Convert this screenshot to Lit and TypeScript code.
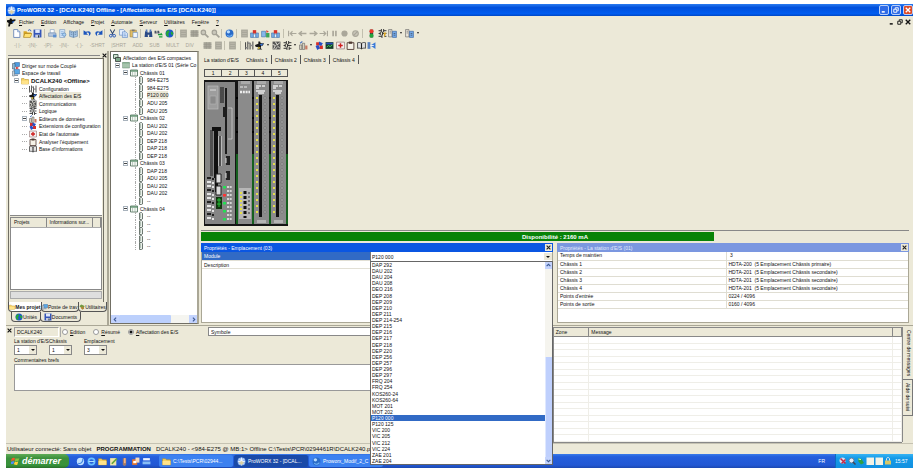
import { LitElement, html, css, svg, nothing } from "lit";
import { customElement, property } from "lit/decorators.js";

const art: Record<string, unknown> = {
  app: svg`<circle cx="8" cy="8" r="7" fill="#8fb7f5"/><path d="M2 8h12M8 1v14M4 3c4 4 4 6 0 10M12 3c-4 4-4 6 0 10" stroke="#fff" stroke-width="1.4" fill="none"/><path d="M3 10l5 4 5-4-5-3z" fill="#d8d0a8"/>`,
  hand: svg`<path d="M0 4l5-1V1h3l1 2 6-1v3l-4 2-1 3-4 1-1 4H2l1-6-3-2z" fill="#111"/><path d="M8 7l5-2-2 4z" fill="#2563d8"/>`,
  page: svg`<path d="M3 1h7l4 4v10H3z" fill="#fff" stroke="#5878b0" stroke-width="1.4"/><path d="M10 1v4h4" fill="#c8dcf8" stroke="#5878b0"/>`,
  open: svg`<path d="M1 4h5l2 2h6v8H1z" fill="#d9a520"/><path d="M3 8h13l-3 7H1z" fill="#ffe070" stroke="#9c7410"/><path d="M9 3c2-3 5-2 5 1" stroke="#2050b0" fill="none" stroke-width="1.5"/>`,
  save: svg`<path d="M1 1h14v14H1z" fill="#3455b8"/><path d="M4 1h8v6H4z" fill="#dfe8fa"/><path d="M4 10h8v5H4z" fill="#c5cbe0"/><path d="M9 11h2v4H9z" fill="#233"/>`,
  print: svg`<path d="M4 1h7v6H4z" fill="#fff" stroke="#7895bd"/><path d="M1 7h13v6H1z" fill="#b7c8de" stroke="#6684ab"/><path d="M9 10h6v5H9z" fill="#5b8fd0"/>`,
  preview: svg`<path d="M3 1h9v14H3z" fill="#d7e8fa" stroke="#6b8db6"/><path d="M5 5h5M5 8h5M5 11h3" stroke="#568cc8"/><circle cx="11" cy="10" r="3" fill="#a8d0f5" stroke="#4c79ad"/>`,
  book: svg`<path d="M1 3l7 2 7-2v10l-7 2-7-2z" fill="#a4c4e4" stroke="#5b7fa8"/><path d="M8 5v10M3 6l3 1M3 9l3 1M10 7l3-1M10 10l3-1" stroke="#47698e"/>`,
  undo: svg`<path d="M1 2v8h8L6 7c3-2 6 0 4 6 7-5 3-12-5-8z" fill="#1c55bd"/>`,
  redo: svg`<path d="M15 2v8H7l3-3c-3-2-6 0-4 6-7-5-3-12 5-8z" fill="#1c55bd"/>`,
  cut: svg`<path d="M4 1l5 9M12 1L7 10" stroke="#28406c" stroke-width="1.8"/><circle cx="5" cy="12" r="2.4" fill="none" stroke="#1c4fb5" stroke-width="1.6"/><circle cx="11" cy="12" r="2.4" fill="none" stroke="#1c4fb5" stroke-width="1.6"/>`,
  copy: svg`<path d="M1 1h7l2 2v8H1z" fill="#eaf3ff" stroke="#4a78bd"/><path d="M6 5h6l3 3v7H6z" fill="#d5e6fc" stroke="#4a78bd"/><path d="M8 9h4M8 12h5" stroke="#4a78bd"/>`,
  paste: svg`<path d="M2 2h11v12H2z" fill="#e2bd62" stroke="#96793a"/><path d="M5 1h5v3H5z" fill="#777"/><path d="M7 6h8v9H7z" fill="#f0f6ff" stroke="#5981b7"/>`,
  find: svg`<path d="M2 4h4l1 10H1zM10 4h4l1 10H9zM6 6h4v4H6z" fill="#2b4a86"/><path d="M3 1h3v4H3zM10 1h3v4h-3z" fill="#4f77be"/>`,
  replace: svg`<path d="M1 3h3l1 5H1zM6 3h3l1 5H6z" fill="#4a5262"/><path d="M7 10h7l-2-3M15 14H9" stroke="#18a038" fill="none" stroke-width="2"/>`,
  globe: svg`<circle cx="8" cy="8" r="7" fill="#1d55d0"/><path d="M3 4c4-4 7 0 4 3s2 4-1 7C2 13 0 8 3 4zM11 4l4 3-2 5-3-4z" fill="#25a53b"/>`,
  grayBox: svg`<path d="M2 1h12v14H2z" fill="#a9a79b"/><path d="M4 4h8M4 8h8M4 12h8" stroke="#c9c6b8"/>`,
  grayGrid: svg`<path d="M1 2h14v12H1z" fill="#a9a79b"/><path d="M1 6h14M1 10h14M6 2v12M11 2v12" stroke="#96948a"/>`,
  zoom: svg`<circle cx="6" cy="6" r="4" fill="#c9c7ba" stroke="#a3a196" stroke-width="2"/><path d="M9 9l6 6" stroke="#a3a196" stroke-width="3"/>`,
  help: svg`<circle cx="8" cy="8" r="7" fill="#2a6bc8"/><circle cx="6" cy="5" r="3" fill="#b8dcff"/><path d="M4 11c3 3 7 2 9-1" stroke="#6fb1f2" stroke-width="2" fill="none"/>`,
  rackRed: svg`<path d="M1 7h5v8H1zM10 7h5v8h-5z" fill="#77aee8" stroke="#3d6da6"/><path d="M5 2h6v6H5z" fill="#d8322a"/><path d="M6 9h4v6H6z" fill="#e8f0fa" stroke="#3d6da6"/>`,
  rackGreen: svg`<path d="M1 4h7v10H1z" fill="#86b6ea" stroke="#3d6da6"/><path d="M9 7h6v8H9z" fill="#3fa45a"/><path d="M9 2l5 2-4 3z" fill="#e04434"/>`,
  arrowL: svg`<path d="M1 3v10M15 8H4M8 4L4 8l4 4" stroke="#aaa79a" stroke-width="2" fill="none"/>`,
  arrowBack: svg`<path d="M15 8H2M7 4L2 8l5 4" stroke="#aaa79a" stroke-width="2.4" fill="none"/>`,
  arrowFwd: svg`<path d="M1 8h13M9 4l5 4-5 4" stroke="#aaa79a" stroke-width="2.4" fill="none"/>`,
  arrowR: svg`<path d="M15 3v10M1 8h11M8 4l4 4-4 4" stroke="#aaa79a" stroke-width="2" fill="none"/>`,
  pause: svg`<path d="M4 3h3v10H4zM9 3h3v10H9z" fill="#aaa79a"/>`,
  dot: svg`<circle cx="8" cy="8" r="5.5" fill="#aaa79a"/>`,
  ring: svg`<circle cx="8" cy="8" r="5" fill="#c9c6b9" stroke="#aaa79a" stroke-width="2"/><path d="M4 12l8-8" stroke="#aaa79a" stroke-width="2"/>`,
  traffic: svg`<path d="M5 1h6v14H5z" fill="#3b4a3c"/><circle cx="8" cy="4" r="3.6" fill="#f0352c"/><circle cx="8" cy="12" r="3.6" fill="#22a53a"/>`,
  ladder: svg`<path d="M1 3h5M10 3h5M1 8h3M8 8h7M1 13h6M11 13h4M6 0v6M10 0v6M4 5v6M8 5v6M7 10v6M11 10v6" stroke="#333" stroke-width="1.7"/>`,
  ladderY: svg`<path d="M1 3h5M10 3h5M1 8h3M8 8h7M1 13h6M11 13h4M6 0v6M10 0v6M4 5v6M8 5v6M7 10v6" stroke="#333" stroke-width="1.7"/><path d="M10 6h5l-4 9z" fill="#d8a426"/>`,
  docBlue: svg`<path d="M1 1h6v13H1z" fill="#e8e4da" stroke="#555"/><path d="M8 4h7v11H8z" fill="#73a8e8" stroke="#2b5799"/><path d="M3 4h2M3 7h2M10 8h3M10 11h3" stroke="#333"/>`,
  config: svg`<path d="M1 2v13M5 1v14M9 3v12M14 1v14" stroke="#444" stroke-width="1.8"/><path d="M5 4h4M9 8h5M1 12h4" stroke="#888" stroke-width="2.5"/>`,
  io: svg`<path d="M0 7l6-2V1h3l1 3 6 0-2 4-3 1-1 4 3 2H4l2-4-5-1z" fill="#161616"/><path d="M8 6l7-2-3 5z" fill="#3c77d8"/><path d="M6 10l3 1-1 3-3 0z" fill="#c9b43c"/>`,
  comm: svg`<path d="M1 1h14v14H1z" fill="#555"/><path d="M1 6l5 2-3 6M6 1l3 6 5-4M9 8l5 5M6 15l3-4" stroke="#e8e6dc" stroke-width="1.7" fill="none"/>`,
  data: svg`<path d="M1 7h4v8H1zM6 4h4v11H6z" fill="#d9d2c0" stroke="#555"/><path d="M11 8h4v7h-4z" fill="#c87a63"/><path d="M2 4l4-3" stroke="#4a72bb" stroke-width="2"/>`,
  ext: svg`<path d="M2 2h6v6H2zM8 8h6v6H8z" fill="#d92f28"/><path d="M7 1l7 3-3 5-4-2zM1 9l5-2 3 6-5 3z" fill="#264fc6"/>`,
  screen: svg`<path d="M1 2h14v12H1z" fill="#153c2a"/><path d="M2 3h12v3H2z" fill="#264dba"/><path d="M3 11l3-3 3 2 4-3" stroke="#48dc62" fill="none" stroke-width="1.6"/>`,
  status: svg`<path d="M1 2h14v12H1z" fill="#f6efef" stroke="#7a5a58"/><path d="M8 4v8M4 8h8" stroke="#cf1f1f" stroke-width="2.6"/>`,
  clip: svg`<path d="M2 3h12v12H2z" fill="#f5f2e8" stroke="#503a32" stroke-width="1.6"/><path d="M5 1h6v4H5z" fill="#503a32"/>`,
  base: svg`<path d="M1 3c3-1 5 0 7 1 2-1 4-2 7-1v10c-3-1-5 0-7 1-2-1-4-2-7-1z" fill="#e3e3e3" stroke="#444" stroke-width="1.6"/><path d="M8 4v10" stroke="#222" stroke-width="2"/>`,
  link: svg`<path d="M1 2h5v12H1z" fill="#5a82c0"/><path d="M15 2v12L6 8z" fill="#3b7ad8"/><path d="M6 8h6" stroke="#fff" stroke-width="1.6"/>`,
  pc: svg`<path d="M4 1h11v9H4z" fill="#58a8e8" stroke="#2c5e94"/><path d="M6 11h6v3H6z" fill="#8b9bae"/><path d="M1 4h4v10H1z" fill="#c8d4e0" stroke="#567"/>`,
  pcRed: svg`<path d="M5 1h10v8H5z" fill="#4d9be0" stroke="#2c5e94"/><path d="M1 3h5v11H1z" fill="#8ab8d8" stroke="#345"/><path d="M8 10l5 4M13 10l-5 4" stroke="#d33" stroke-width="2"/>`,
  folder: svg`<path d="M1 3h5l2 2h7v9H1z" fill="#f5cf5c" stroke="#b58a1c"/><path d="M1 7h14v7H1z" fill="#ffe38a"/>`,
  chassis: svg`<path d="M1 2h14v12H1z" fill="#f3f7f3" stroke="#4a6a54" stroke-width="1.6"/><path d="M1 4h14" stroke="#4f8a62" stroke-width="2.5"/><path d="M5 5v9M10 5v9" stroke="#86a08e"/>`,
  station: svg`<path d="M1 3h14v11H1z" fill="#dce9dd" stroke="#61806a"/><path d="M1 4h14M4 5v9M8 5v9M12 5v9" stroke="#4c8a5c" stroke-width="1.5"/>`,
  rootIcon: svg`<path d="M1 1h9v8H1z" fill="#cde0d0" stroke="#2c4a36" stroke-width="1.6"/><path d="M5 7h10v8H5z" fill="#7ea98a" stroke="#222" stroke-width="1.4"/>`,
  module: svg`<path d="M5 2l4-1 2 2v11l-2 1H5z" fill="#e9efea" stroke="#55625a" stroke-width="1.7"/><path d="M7 4v8" stroke="#7a927f"/>`,
  utils: svg`<path d="M1 6l5-5 9 4-4 8z" fill="#6f9a3e"/><path d="M4 10l6-4 4 6-5 3z" fill="#b08436"/>`,
  ie: svg`<circle cx="8" cy="8" r="5.5" fill="none" stroke="#6ac0ff" stroke-width="3"/><path d="M3 8h10" stroke="#b0e0ff" stroke-width="2"/>`,
  mail: svg`<circle cx="8" cy="8" r="6.5" fill="#bfe0ff"/><path d="M4 11c5 2 9-3 8-8" stroke="#3f86e0" fill="none" stroke-width="2"/>`,
  paint: svg`<path d="M2 2h11v13H2z" fill="#f0e6a8"/><path d="M5 12l9-9" stroke="#64a63c" stroke-width="3"/>`,
  acro: svg`<path d="M5 2h6v12l-3 2-3-2z" fill="#a07a6a"/><path d="M7 2h3v9H7z" fill="#f0b482"/>`,
  office: svg`<path d="M2 4h9v10H2z" fill="#e8762c"/><path d="M8 1h7v9H8z" fill="#f5d9bd"/><path d="M4 7h5v4H4z" fill="#fff"/>`,
  desk: svg`<path d="M2 2h12v4H2z" fill="#f0f5ff"/><path d="M1 8h14v5H1z" fill="#88bdf5"/>`,
  flag: svg`<path d="M1 3c2-2 4-2 6-1L6 7C4 6 2 6 0 8z" fill="#f0582c"/><path d="M8 2c2 1 4 1 7 0l-2 5c-2 1-4 1-6 0z" fill="#86c440"/><path d="M0 9c2-2 4-2 6-1l-2 5c-2-1-3-1-5 1z" fill="#4c8df5"/><path d="M7 8c2 1 4 1 6 0l-2 6c-2 1-4 0-6-1z" fill="#fbd034"/>`,
  trayRed: svg`<circle cx="7" cy="7" r="6" fill="#d5dff0"/><path d="M3 3l10 10M13 5l-8 8" stroke="#c82844" stroke-width="3"/>`,
  traySearch: svg`<circle cx="7" cy="7" r="5" fill="#e8edf5" stroke="#667a9a" stroke-width="2"/><path d="M10 10l5 5" stroke="#445" stroke-width="3"/>`,
  trayGreen: svg`<path d="M2 2l7 2 5 8-6 3-5-6z" fill="#2fa043"/><path d="M3 4l5 1" stroke="#d8ffd8" stroke-width="2"/>`,
  blank: svg`<path d="M1 1h15v15H1z" fill="#f4f3e6"/>`,
  lock: svg`<path d="M2 7h12v8H2z" fill="#d8c766"/><path d="M5 7V4c0-4 6-4 6 0v3" stroke="#dfe6f0" stroke-width="2" fill="none"/>`,
};

const icon = (name: string) =>
  html`<svg class="icon" viewBox="0 0 16 16" aria-hidden="true">${art[name]}</svg>`;

const base = css`
  * { box-sizing: border-box; }
  .icon { width: 9px; height: 9px; flex: none; display: block; }
  button, input, select, textarea { font: inherit; color: inherit; margin: 0; padding: 0; border: 0; background: none; border-radius: 0; }
  ul { list-style: none; margin: 0; padding: 0; }
`;

const SEP = "|";
const WIDE = "||";
const fileTools = ["page", "open", "save", SEP, "print", "preview", "book", SEP, "undo", "redo", SEP, "cut", "copy", "paste", SEP,
  "find", "replace", "globe", SEP, "grayBox", "grayGrid", "zoom", "zoom", SEP, "help", SEP, "grayBox", "rackRed", "rackGreen", "rackRed", WIDE,
  "arrowL", "arrowBack", "arrowFwd", "arrowR", "pause", "dot", "ring", WIDE, "traffic", "ladderY", "docBlue", "v", "docBlue", "v"];
const viewTools = ["grayGrid", "grayBox", SEP, "grayBox", WIDE, "config", "io", "v", "comm", "ladder", "v", "data", "v", "ext", "screen", "status", "clip", "base", "link"];
const logicTools = ["-| |-", "-|N|-", "-|P|-", "-|N|-", "-( )-", "-SHRT", "|SHRT", "ADD", "SUB", "MULT", "DIV"];

@customElement("tool-strip")
class ToolStrip extends LitElement {
  @property({ attribute: false }) items: string[] = [];
  static styles = [base, css`
    :host { display: flex; align-items: center; }
    .tool { width: 10px; height: 10px; display: grid; place-items: center; margin-right: 1px; flex: none; }
    .tool:nth-of-type(2n) { margin-right: 0; }
    .sep { width: 1px; height: 9px; background: #c2bfae; margin: 0 2px 0 1px; flex: none; }
    .wide { margin: 0 3px 0 2px; }
    .more { width: 5px; margin-right: 1px; display: grid; place-items: center; }
    .more::after { content: ""; border: 1px solid transparent; border-top: 2px solid #222; }
  `];
  render() {
    return this.items.map((n) => n === SEP || n === WIDE ? html`<span class="sep ${n === WIDE ? "wide" : ""}"></span>`
      : n === "v" ? html`<button class="more" aria-label="Options"></button>`
      : html`<button class="tool" aria-label=${n}>${icon(n)}</button>`);
  }
}

interface Node { t: string; i: string; l: number; open?: string; bold?: boolean; sel?: boolean }

@customElement("tree-list")
class TreeList extends LitElement {
  @property({ attribute: false }) nodes: Node[] = [];
  static styles = [base, css`
    :host { display: block; }
    ul { height: 100%; display: grid; grid-auto-rows: 1fr; }
    li { display: flex; align-items: center; min-height: 0; white-space: nowrap; gap: 2px; }
    .l0 { padding-left: 2px; }
    .l1 { padding-left: 4px; }
    .l2 { padding-left: 12px; }
    .l3 { padding-left: 28px; }
    .icon { width: 8px; height: 8px; }
    .box { width: 5px; height: 5px; border: 1px solid #a9b3bd; display: grid; place-items: center; flex: none; }
    .box::after { content: ""; width: 3px; height: 1px; background: #444; }
    .stub { width: 5px; border-top: 1px dotted #aaa; flex: none; }
    .l3 .stub { border-left: 1px dotted #aaa; align-self: stretch; border-top: 0; margin-right: -4px; margin-left: -4px; width: 4px; }
    .bold { font-weight: bold; font-size: 6px; }
    .sel { background: #ece9d8; }
  `];
  render() {
    return html`<ul>${this.nodes.map((n) => html`<li class="l${n.l}">
      ${n.open ? html`<span class="box"></span>` : n.l > 1 ? html`<span class="stub"></span>` : nothing}
      ${icon(n.i)}<span class="${n.bold ? "bold" : ""} ${n.sel ? "sel" : ""}">${n.t}</span></li>`)}</ul>`;
  }
}

const projectNodes: Node[] = [
  { t: "Diriger sur mode Couplé", i: "pcRed", l: 0 },
  { t: "Espace de travail", i: "pc", l: 0 },
  { t: "DCALK240 <Offline>", i: "folder", l: 1, open: "-", bold: true },
  { t: "Configuration", i: "config", l: 2 },
  { t: "Affectation des E/S", i: "io", l: 2, sel: true },
  { t: "Communications", i: "comm", l: 2 },
  { t: "Logique", i: "ladder", l: 2 },
  { t: "Editeurs de données", i: "data", l: 2, open: "+" },
  { t: "Extensions de configuration", i: "ext", l: 2 },
  { t: "Etat de l'automate", i: "status", l: 2 },
  { t: "Analyser l'équipement", i: "clip", l: 2 },
  { t: "Base d'informations", i: "base", l: 2 },
];

const chassis: [string, string[]][] = [
  ["Châssis 01", ["984-E275", "984-E275", "P120 000", "ADU 205", "ADU 205"]],
  ["Châssis 02", ["DAU 202", "DAU 202", "DEP 218", "DAP 218", "DEP 218"]],
  ["Châssis 03", ["DAP 218", "ADU 205", "DAU 202", "DAU 202", "--"]],
  ["Châssis 04", ["--", "--", "--", "--", "--"]],
];
const ioNodes: Node[] = [
  { t: "Affectation des E/S compactes", i: "rootIcon", l: 0 },
  { t: "La station d'E/S 01 (Série Co", i: "station", l: 1, open: "-" },
  ...chassis.flatMap(([t, mods]): Node[] => [
    { t, i: "chassis", l: 2, open: "-" },
    ...mods.map((m): Node => ({ t: m, i: "module", l: 3, sel: m === "P120 000" })),
  ]),
];

const modules = ["DAP 292", "DAU 202", "DAU 204", "DAU 208", "DEO 216", "DEP 208", "DEP 209", "DEP 210", "DEP 211", "DEP 214-254",
  "DEP 215", "DEP 216", "DEP 217", "DEP 218", "DEP 220", "DEP 256", "DEP 257", "DEP 296", "DEP 297", "FRQ 204", "FRQ 254",
  "KOS260-24", "KOS260-64", "MOT 201", "MOT 202", "P120 000", "P120 125", "VIC 200", "VIC 205", "VIC 212", "VIC 224", "ZAE 201", "ZAE 204"];

const stationRows = [
  ["Temps de maintien", " 3"],
  ["Châssis 1", "HDTA-200  (5 Emplacement Châssis primaire)"],
  ["Châssis 2", "HDTA-201  (5 Emplacement Châssis secondaire)"],
  ["Châssis 3", "HDTA-201  (5 Emplacement Châssis secondaire)"],
  ["Châssis 4", "HDTA-201  (5 Emplacement Châssis secondaire)"],
  ["Points d'entrée", "0224 / 4096"],
  ["Points de sortie", "0160 / 4096"],
];

const range = (n: number) => Array.from({ length: n }, (_, i) => i);

const ioModule = (x: number) => svg`
  <rect x=${x} y="1" width="15" height="143" fill="#8b8b8b"/>
  <rect x=${x + 3} y="1" width="9" height="3" fill="#aaa"/>
  <path d="M${x + 2} 6h5M${x + 2} 8h3M${x + 8} 6h3M${x + 2} 11h9M${x + 4} 13h6" stroke="#e8e8e8" stroke-width="1.4"/>
  <rect x=${x + 5} y="15" width="3" height="122" fill="#111"/>
  <rect x=${x + 3} y="140" width="9" height="3" fill="#b5b5b5"/>
  ${range(20).map((i) => svg`<rect x=${x + 2} y=${17 + i * 6} width="2" height="2" fill="#e6e04a"/><circle cx=${x + 11} cy=${18 + i * 6} r="1.3" fill="#aaa" stroke="#666" stroke-width=".5"/>`)}
`;

const rackArt = svg`
  <rect width="84" height="146" fill="#161616"/>
  <rect x="1" y="2" width="30" height="142" fill="#858585"/>
  <rect x="4" y="6" width="10" height="23" fill="#9d9d9d" stroke="#bbb" stroke-width=".7"/>
  <path d="M6 10h6" stroke="#ddd"/><rect x="6" y="16" width="6" height="8" fill="#8a8a8a" stroke="#bbb" stroke-width=".5"/>
  ${range(8).map((i) => svg`<path d="M16 ${8 + i * 2}h4" stroke="#111"/>`)}
  <path d="M22 8v66" stroke="#1c1c1c" stroke-width="2"/><path d="M20 27v10" stroke="#1c1c1c" stroke-width="2"/>
  <path d="M24 28h4v31h-4" stroke="#ccc" fill="none" stroke-width=".8"/>
  <path d="M8 47h9v4H8z" fill="#101010"/>
  <path d="M10 50h4v62h-3V98h-1z" fill="#101010"/>
  ${range(23).map((i) => svg`<path d="M6 ${51 + i * 2}h3" stroke="#1c1c1c"/>`)}
  <path d="M14 56h4v30h-4z" fill="#b9b9b9"/><path d="M16 56v30" stroke="#222" stroke-width="1.4"/>
  <path d="M12 94h5v9h-5zM12 106h5v9h-5z" fill="#ddd" stroke="#222"/>
  <rect x="12" y="117" width="6" height="12" fill="#12360f"/><path d="M13 120h4M13 124h4M15 118v9" stroke="#23c136"/>
  <path d="M22 76h4v9h-4zM22 91h4v9h-4z" fill="#222"/><path d="M22 78v5M22 93v5" stroke="#ddd"/>
  ${range(11).map((i) => svg`<path d="M3 ${98 + i * 4}h4M8 ${99 + i * 4}h2" stroke=${i % 3 ? "#e4e4e4" : "#222"} stroke-width="2"/>`)}
  ${range(9).map((i) => svg`<rect x="19" y=${106 + i * 4} width="3" height="2.5" fill=${i === 2 ? "#f33" : i % 2 ? "#858585" : "#22e052"}/><path d="M23 ${107 + i * 4}h5" stroke="#eee" stroke-width="1.5" stroke-dasharray="2 .7"/>`)}
  <rect x="34" y="1" width="14" height="143" fill="#8b8b8b"/><rect x="37" y="1" width="9" height="3" fill="#aaa"/>
  <path d="M36 7h8" stroke="#bbb" stroke-width="2" stroke-dasharray="3 1"/><path d="M36 12h10" stroke="#eee" stroke-width="2.4" stroke-dasharray="2 .8"/>
  <rect x="35" y="108" width="12" height="31" fill="#b6b6b6"/><path d="M41 111v27" stroke="#111" stroke-width="3" stroke-dasharray="3 2"/>
  ${range(6).map((i) => svg`<rect x="36" y=${112 + i * 4} width="2" height="2" fill="#e6e04a"/><path d="M44 ${113 + i * 4}h2" stroke="#333"/>`)}
  ${ioModule(50)}${ioModule(67)}
  <path d="M33 74v70M49 74v70M66 74v70M83 74v70" stroke="#167a22" stroke-width="1.5"/>
  <path d="M32 18h2M32 38h2M32 52h2M48 18h2M48 38h2M48 52h2M65 18h2M65 38h2M65 52h2" stroke="#000" stroke-width="2"/>
`;

@customElement("app-root")
class AppRoot extends LitElement {
  static styles = [base, css`
    :host { display: flex; flex-direction: column; height: 100vh; min-height: 460px; box-sizing: border-box; padding: 4px 1px 2px 6px; background: #fff; color: #111;
      font: 5px/8px "Liberation Sans", sans-serif; white-space: nowrap; overflow: hidden; }
    .title { flex: none; height: 12px; display: flex; align-items: center; gap: 1px; padding: 0 0 0 1px; color: #fff; font: bold 6px/8px "Liberation Sans", sans-serif; background: linear-gradient(#2a7bf0, #0050dc 30%, #005cf0 80%, #0048c4); }
    .title h1 { font: inherit; margin: 0; flex: 1; }
    .win { width: 10px; height: 10px; border: 1px solid #b9cff8; border-radius: 2px; background: #2f6be6; color: #fff; display: grid; place-items: center; margin-right: 1px; }
    .win.close { background: #dd4a26; margin-right: 0; }
    .win svg, .mini svg { width: 6px; height: 6px; }
    .shell { flex: 1; min-height: 0; display: flex; flex-direction: column; background: #ece9d8; }
    .menu { flex: none; height: 12px; display: flex; align-items: center; gap: 7px; padding: 0 1px 0 1px; }
    .menu .icon { margin-right: -4px; }
    .grow { flex: 1; }
    .mini { width: 8px; display: grid; place-items: center; margin-left: -7px; }
    .bar { flex: none; height: 11px; display: flex; align-items: center; padding-left: 5px; }
    .bar.second { height: 12px; padding-left: 8px; }
    .logic { display: flex; justify-content: space-between; color: #a9a698; width: 180px; flex: none; margin-right: 8px; }
    .main { flex: none; height: 274px; display: grid; grid-template-columns: 103px 89px minmax(0, 1fr); gap: 1px; }
    .dock { display: flex; flex-direction: column; padding: 1px 0 3px 2px; border-right: 2px solid #aaa796; min-width: 0; }
    .dockhead { height: 6px; display: flex; align-items: center; gap: 1px; }
    .dockhead i { flex: 1; border-top: 1px solid #888; }
    .dockhead button, .x { width: 6px; height: 6px; display: grid; place-items: center; }
    .x svg { width: 5px; height: 5px; }
    .frame { flex: 1; min-height: 0; display: flex; flex-direction: column; margin-right: 3px; border: 1px solid #716f64; border-bottom: 0; background: #ece9d8; padding: 0 1px; }
    .projects { height: 157px; flex: none; background: #fff; border-bottom: 1px solid #888; padding-top: 3px; overflow: hidden; }
    .projects tree-list { height: 91px; }
    .list { flex: 1; background: #fff; border: 1px solid #888; margin-top: 1px; }
    .list table { width: 100%; border-collapse: collapse; table-layout: fixed; background: #ece9d8; }
    th { font-weight: normal; text-align: left; padding: 0 3px; border-right: 1px solid #888; }
    .list th { height: 9px; border-bottom: 1px solid #aaa; }
    .p1 { width: 35px; } .p2 { width: 46px; }
    .thumb { height: 8px; background: #dedede; border: 1px solid #aaa; margin: 1px 0 3px; }
    .tabs { height: 10px; display: flex; }
    .tabs button { flex: 1 0 auto; display: flex; align-items: center; justify-content: center; border: 1px solid #555; border-top: 0; border-radius: 0 0 4px 4px; }
    .tabs button + button { margin-left: -1px; }
    .tabs .on { background: #fff; font-weight: bold; }
    .tabs .icon { width: 6px; height: 6px; }
    .tabs.low { margin: 0 26px 0 3px; }
    .tabs.low .icon { width: 8px; height: 8px; }
    .iotree { background: #fff; border: 1px solid #716f64; border-right: 2px solid #aaa796; display: flex; flex-direction: column; overflow: hidden; padding: 2px 0 0; margin-bottom: 1px; }
    .iotree tree-list { height: 196px; }
    .hscroll { margin: auto 0 0; height: 8px; display: flex; background: #f5f5f0; }
    .hscroll button { width: 8px; background: #c3d3fd; display: grid; place-items: center; }
    .hscroll i { width: 52px; background: #bcd0fc; border-radius: 1px; }
    .hscroll svg { width: 5px; height: 5px; }
    .work { min-width: 0; display: flex; flex-direction: column; padding: 0 4px 2px 1px; }
    .pages { height: 16px; display: flex; align-items: center; padding: 3px 0 0 3px; }
    .pages button { padding: 0 3px; height: 9px; border-right: 1px solid #555; margin-bottom: 2px; }
    .pages button:first-child { border: 0; padding: 0 4px 0 0; }
    .canvas { flex: 1; min-height: 0; border-bottom: 1px solid #888; padding: 2px 0 0 3px; }
    .slots { display: grid; grid-template-columns: repeat(5, 1fr); width: 84px; text-align: center; line-height: 6px; border: 1px solid #555; margin-bottom: 3px; }
    .slots span + span { border-left: 1px solid #555; }
    .rack { display: block; width: 84px; height: 146px; }
    .power { height: 9px; margin: 1px 0 2px; position: relative; display: grid; place-items: center; color: #fff; font-weight: bold; font-size: 6px; }
    .fill { position: absolute; inset: 0 auto 0 0; background: #078307; }
    .power b { position: relative; }
    .props { height: 80px; display: grid; grid-template-columns: 1fr 1fr; gap: 4px; }
    .panel { background: #fff; border: 1px solid #aaa796; border-top: 0; display: flex; flex-direction: column; min-width: 0; }
    .panel h2 { margin: 0 -1px; font: inherit; height: 9px; background: #0a56e2; color: #fff; display: flex; align-items: center; justify-content: space-between; padding: 0 1px 0 3px; }
    .panel.off h2 { background: #7b97e0; color: #e6ecfb; }
    .panel h2 button { width: 7px; height: 7px; background: #ece9d8; color: #222; display: grid; place-items: center; }
    .panel h2 svg { width: 5px; height: 5px; }
    .row { display: grid; grid-template-columns: 12fr 13fr; height: 8px; border-bottom: 1px solid #e2e0d6; }
    .row > * { padding-left: 2px; }
    .row.active { background: #316ac5; color: #fff; height: 9px; }
    .row .cell { position: relative; background: #fff; color: #111; padding: 0; border-left: 1px solid #777; }
    .pick { display: block; appearance: none; width: 100%; height: 9px; padding: 0 1px; }
    .arrow { position: absolute; right: 0; top: 1px; width: 8px; height: 7px; background: #ece9d8; display: grid; place-items: center; pointer-events: none; }
    .arrow::after { content: ""; border: 2px solid transparent; border-top-color: #111; margin-top: 2px; }
    .pop { position: absolute; z-index: 5; left: -1px; right: -1px; top: 9px; height: 204px; display: flex; background: #fff; border: 1px solid #666; line-height: 6px; }
    .pop ul { flex: 1; display: grid; grid-auto-rows: 1fr; }
    .pop li { padding-left: 1px; }
    .pop .cur { background: #316ac5; color: #fff; }
    .vscroll { width: 7px; display: flex; flex-direction: column; background: #f5f4ee; }
    .vscroll button { height: 7px; background: #c3d3fd; display: grid; place-items: center; }
    .vscroll svg { width: 5px; height: 5px; }
    .vscroll i { background: #bfd0fd; flex: 1; margin-top: 88px; border-left: 1px solid #dfe8ff; }
    table.sheet { width: 100%; border-collapse: collapse; table-layout: fixed; }
    .sheet td { height: 8px; padding: 0 2px; border-bottom: 1px solid #dfddd2; line-height: 7px; white-space: pre; }
    .sheet td:first-child { width: 48%; }
    .sheet td + td { border-left: 1px solid #dfddd2; }
    .bottom { flex: 1; min-height: 0; display: flex; border-top: 1px solid #aaa796; padding-top: 1px; }
    .grip { width: 7px; display: flex; justify-content: center; flex: none; }
    .editor { flex: 1; min-width: 0; padding: 0 2px 0 1px; }
    .strip { height: 9px; display: grid; grid-template-columns: 45px 147px 1fr; gap: 1px; }
    .sunk { border: 1px solid #aaa796; border-color: #999 #fff #fff #999; padding-left: 2px; line-height: 8px; }
    .radios { display: flex; align-items: center; gap: 8px; padding-left: 1px; border-left: 1px solid #aaa; }
    .radios label { display: flex; align-items: center; gap: 2px; }
    .radios input { appearance: none; width: 6px; height: 6px; border: 1px solid #999; border-radius: 50%; background: #fff; }
    .radios input:checked { background: radial-gradient(#111 0 1px, #fff 2px); }
    .name { background: #fff; border: 1px solid #888; padding: 0 2px; width: 100%; min-width: 0; height: 9px; }
    .fields { display: flex; padding-top: 1px; }
    .fields label { width: 35px; display: block; }
    .fields span { display: block; height: 8px; }
    .fields select { appearance: none; background: #fff; border: 1px solid #888; width: 23px; height: 10px; padding: 0 2px; display: block; }
    .combo { position: relative; width: 23px; }
    .combo .arrow { right: 1px; top: 1px; height: 8px; width: 7px; }
    .note { display: block; margin-top: 1px; }
    .note textarea { display: block; width: 100%; height: 27px; border: 1px solid #999; background: #fff; resize: none; }
    .messages { flex: 0 0 38.5%; background: #fff; border-left: 1px solid #888; border-bottom: 1px solid #888; }
    .messages table { width: 100%; height: 100%; border-collapse: collapse; table-layout: fixed; }
    .messages th { height: 9px; background: #ece9d8; border: 1px solid #888; border-left: 0; padding: 0 2px; line-height: 7px; }
    .messages td { border-bottom: 1px solid #efeee8; border-right: 1px solid #efeee8; padding: 0; }
    .c1 { width: 35px; } .c3 { width: 9px; }
    .side { width: 11px; flex: none; display: flex; flex-direction: column; border-left: 1px solid #888; margin-bottom: 1px; }
    .side button { writing-mode: vertical-rl; padding: 3px 0; width: 10px; line-height: 9px; }
    .side button + button { border: 1px solid #777; border-left: 0; }
    .foot { flex: none; height: 11px; display: flex; align-items: center; gap: 5px; padding-left: 1px; border-top: 1px solid #c5c2b2; font-size: 6px; }
    .task { flex: none; height: 14px; display: flex; align-items: stretch; color: #fff; background: linear-gradient(#3a7bea, #245edc 20%, #2258d4 80%, #1c48b0); }
    .start { width: 63px; display: flex; align-items: center; gap: 2px; padding-left: 5px; font: italic bold 9px/10px "Liberation Sans", sans-serif; background: linear-gradient(#5eac56, #3c8f3c 30%, #37933a 80%, #2a6f2b); border-radius: 0 5px 5px 0; color: #fff; }
    .quick { width: 90px; display: flex; align-items: center; gap: 2px; padding-left: 7px; }
    .app { width: 74px; margin: 1px 1px 1px 0; background: #3c81f0; border-radius: 2px; display: flex; align-items: center; gap: 2px; padding-left: 3px; }
    .app.on { background: #1a4aa8; }
    .lang { margin-right: 10px; align-self: center; }
    .tray { width: 78px; background: linear-gradient(#38b4f4, #149ae8 30%, #1290e0); display: flex; align-items: center; padding-left: 3px; border-left: 1px solid #0d6bbf; }
    .tray .icon { width: 8px; height: 8px; margin-right: 1px; }
    .tray time { margin-left: 2px; }
  `];

  private cross() {
    return html`<svg viewBox="0 0 8 8" aria-hidden="true"><path d="M1 1l6 6M7 1L1 7" stroke="currentColor" stroke-width="1.8"/></svg>`;
  }
  private chevron(d: string) {
    return html`<svg viewBox="0 0 8 8" aria-hidden="true"><path d=${d} stroke="#3d5a94" stroke-width="1.8" fill="none"/></svg>`;
  }
  private winIcons() {
    return [
      html`<svg viewBox="0 0 8 8"><path d="M1 6.5h4" stroke="currentColor" stroke-width="2"/></svg>`,
      html`<svg viewBox="0 0 8 8"><path d="M3 2.5V1h4v4H5.5M1 3h4v4H1z" stroke="currentColor" fill="none" stroke-width="1.2"/></svg>`,
      this.cross(),
    ];
  }
  private combo(label: string, value: string) {
    return html`<label><span>${label}</span><div class="combo"><select><option>${value}</option></select><i class="arrow"></i></div></label>`;
  }

  render() {
    const names = ["Réduire", "Restaurer", "Fermer"];
    return html`
      <header class="title">${icon("app")}<h1>ProWORX 32 - [DCALK240] Offline - [Affectation des E/S [DCALK240]]</h1>
        ${this.winIcons().map((g, i) => html`<button class="win ${i === 2 ? "close" : ""}" aria-label=${names[i]}>${g}</button>`)}
      </header>
      <div class="shell">
        <nav class="menu">${icon("hand")}
          <button><u>F</u>ichier</button><button><u>E</u>dition</button><button>Affichage</button><button><u>P</u>rojet</button><button><u>A</u>utomate</button><button><u>S</u>erveur</button><button><u>U</u>tilitaires</button><button>Fe<u>n</u>être</button><button><u>?</u></button>
          <span class="grow"></span>
          ${this.winIcons().map((g, i) => html`<button class="mini" aria-label=${names[i]}>${g}</button>`)}
        </nav>
        <div class="bar"><tool-strip .items=${fileTools}></tool-strip></div>
        <div class="bar second"><div class="logic">${logicTools.map((t) => html`<button disabled>${t}</button>`)}</div><tool-strip .items=${viewTools}></tool-strip></div>

        <main class="main">
          <aside class="dock">
            <div class="dockhead"><i></i><button aria-label="Fermer" class="x">${this.cross()}</button></div>
            <div class="frame">
              <div class="projects"><tree-list .nodes=${projectNodes}></tree-list></div>
              <div class="list"><table><tr><th class="p1">Projets</th><th class="p2">Informations sur...</th><th></th></tr></table></div>
              <div class="thumb"></div>
            </div>
            <div class="tabs"><button class="on">${icon("folder")}Mes projet</button><button>${icon("pc")}Poste de trav</button><button>${icon("utils")}Utilitaires</button></div>
            <div class="tabs low"><button>${icon("globe")}Unités</button><button>${icon("save")}Documents</button></div>
          </aside>

          <section class="iotree">
            <tree-list .nodes=${ioNodes}></tree-list>
            <div class="hscroll"><button aria-label="Gauche">${this.chevron("M5 1L2 4l3 3")}</button><i></i><span class="grow"></span><button aria-label="Droite">${this.chevron("M3 1l3 3-3 3")}</button></div>
          </section>

          <section class="work">
            <div class="pages"><button>La station d'E/S</button>${[1, 2, 3, 4].map((n) => html`<button>Châssis ${n}</button>`)}</div>
            <div class="canvas">
              <div class="slots">${[1, 2, 3, 4, 5].map((n) => html`<span>${n}</span>`)}</div>
              <svg class="rack" viewBox="0 0 84 146" role="img" aria-label="Châssis 1">${rackArt}</svg>
            </div>
            <div class="power"><div class="fill" style="width:72.4%"></div><b>Disponibilité : 2160 mA</b></div>
            <div class="props">
              <section class="panel">
                <h2>Propriétés - Emplacement (03)<button aria-label="Fermer">${this.cross()}</button></h2>
                <div class="row active"><label for="module">Module</label>
                  <div class="cell"><select id="module" class="pick"><option>P120 000</option></select><i class="arrow"></i>
                    <div class="pop"><ul role="listbox">${modules.map((m) => html`<li role="option" class=${m === "P120 000" ? "cur" : ""}>${m}</li>`)}</ul>
                      <div class="vscroll"><button aria-label="Haut">${this.chevron("M1 5l3-3 3 3")}</button><i></i><button aria-label="Bas">${this.chevron("M1 3l3 3 3-3")}</button></div>
                    </div>
                  </div>
                </div>
                <div class="row"><span>Description</span><span></span></div>
              </section>
              <section class="panel off">
                <h2>Propriétés - La station d'E/S (01)<button aria-label="Fermer">${this.cross()}</button></h2>
                <table class="sheet">${stationRows.map(([a, b]) => html`<tr><td>${a}</td><td>${b}</td></tr>`)}</table>
              </section>
            </div>
          </section>
        </main>

        <div class="bottom">
          <div class="grip"><button class="x" aria-label="Fermer">${this.cross()}</button></div>
          <section class="editor">
            <div class="strip">
              <div class="sunk">DCALK240</div>
              <div class="radios">
                <label><input type="radio" name="mode"><span><u>E</u>dition</span></label>
                <label><input type="radio" name="mode"><span><u>R</u>ésumé</span></label>
                <label><input type="radio" name="mode" checked><span><u>A</u>ffectation des E/S</span></label>
              </div>
              <input class="name" aria-label="Symbole" value="Symbole">
            </div>
            <div class="fields">${this.combo("La station d'E/S", "1")}${this.combo("Châssis", "1")}${this.combo("Emplacement", "3")}</div>
            <label class="note">Commentaires brefs<textarea></textarea></label>
          </section>
          <section class="messages"><table>
            <colgroup><col class="c1"><col><col class="c3"></colgroup>
            <tr><th>Zone</th><th>Message</th><th></th></tr>
            ${range(16).map(() => html`<tr><td></td><td></td><td></td></tr>`)}
          </table></section>
          <div class="side"><button>Centre de messages</button><button>Aide de suivi</button></div>
        </div>
        <footer class="foot"><span>Utilisateur connecté: Sans objet</span><b>PROGRAMMATION</b><span>DCALK240 - &lt;984-E275 @ MB:1&gt; Offline  C:\\Tests\\PCR\\0294461R\\DCALK240.pw</span></footer>
      </div>
      <div class="task">
        <button class="start">${icon("flag")}démarrer</button>
        <div class="quick">${["mail", "ie", "folder", "paint", "acro", "office", "desk"].map(icon)}</div>
        <button class="app">${icon("folder")}C:\\Tests\\PCR\\02944...</button>
        <button class="app on">${icon("app")}ProWORX 32 - [DCAL...</button>
        <button class="app">${icon("help")}Proworx_Modif_2_C</button>
        <span class="grow"></span><span class="lang">FR</span>
        <div class="tray">${["trayRed", "traySearch", "trayGreen", "blank", "blank", "lock"].map(icon)}<time>15:57</time></div>
      </div>`;
  }
}
